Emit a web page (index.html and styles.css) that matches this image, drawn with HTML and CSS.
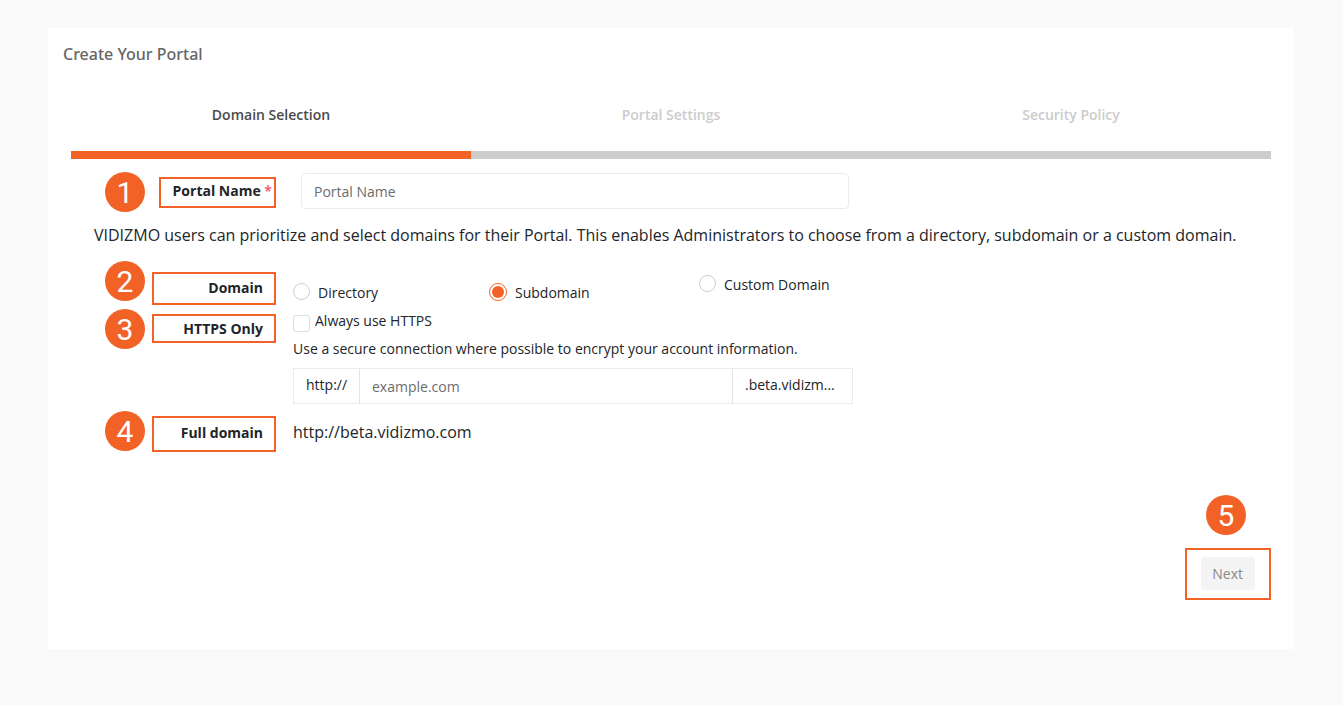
FILE: index.html
```html
<!DOCTYPE html>
<html lang="en">
<head>
<meta charset="utf-8">
<meta name="viewport" content="width=device-width, initial-scale=1">
<title>Create Your Portal</title>
<link rel="stylesheet" href="styles.css">
</head>
<body>
<main class="card">
  <header class="card-header"><h1 class="card-title">Create Your Portal</h1></header>
  <ol class="steps">
    <li class="step step-active" aria-current="step">Domain Selection</li>
    <li class="step">Portal Settings</li>
    <li class="step">Security Policy</li>
  </ol>
  <form class="form">
    <div class="row">
      <span class="badge">1</span>
      <label class="tag tag-name" for="portal-name">Portal Name&nbsp;<span class="required">*</span></label>
      <div class="field field-name"><input class="input" id="portal-name" type="text" placeholder="Portal Name"></div>
    </div>
    <p class="intro">VIDIZMO users can prioritize and select domains for their Portal. This enables Administrators to choose from a directory, subdomain or a custom domain.</p>
    <div class="row row-domain" role="radiogroup" aria-labelledby="domain-label">
      <span class="badge">2</span>
      <span class="tag tag-domain" id="domain-label">Domain</span>
      <div class="field options">
        <label class="option option-low"><input class="radio" type="radio" name="domain"><span>Directory</span></label>
        <label class="option option-low"><input class="radio" type="radio" name="domain" checked><span>Subdomain</span></label>
        <label class="option"><input class="radio" type="radio" name="domain"><span>Custom Domain</span></label>
      </div>
    </div>
    <div class="row row-https">
      <span class="badge">3</span>
      <span class="tag tag-https">HTTPS Only</span>
      <div class="field">
        <label class="check"><input class="checkbox" type="checkbox"><span>Always use HTTPS</span></label>
        <p class="help">Use a secure connection where possible to encrypt your account information.</p>
        <div class="group">
          <span class="addon">http://</span>
          <input class="group-input" type="text" placeholder="example.com" aria-label="Subdomain name">
          <span class="addon">.beta.vidizm...</span>
        </div>
      </div>
    </div>
    <div class="row row-full">
      <span class="badge">4</span>
      <span class="tag tag-full">Full domain</span>
      <output class="field full-domain">http://beta.vidizmo.com</output>
    </div>
    <div class="actions">
      <span class="badge">5</span>
      <div class="next-frame"><button class="next" type="button" disabled>Next</button></div>
    </div>
  </form>
</main>
</body>
</html>
```
FILE: styles.css
```css
* { box-sizing: border-box; }
body {
  margin: 0;
  background: #fafafa;
  color: #212529;
  font: 14px/24px "Open Sans", "Noto Sans", sans-serif;
}
.card { margin: 28px 49px 56px 48px; padding-bottom: 49px; background: #fff; }
.card-header { padding: 14px 15px 13px; border-bottom: 1px solid #fdfdfd; }
.card-title { margin: 0; color: #666; font-family: "Noto Sans", "Open Sans", sans-serif; font-size: 16px; font-weight: 500; line-height: 24px; }
.steps { display: flex; margin: 0 23px; padding: 0; list-style: none; }
.step {
  flex: 1;
  padding: 23px 0 24px;
  border-bottom: 8px solid #ccc;
  color: #ccc;
  font-weight: 600;
  text-align: center;
}
.step-active { border-color: #f26227; color: #4a4a4a; }
.form { padding: 13px 23px 0; }
.row {
  display: grid;
  grid-template-columns: 40px 124px minmax(0, 560px);
  column-gap: 7px;
  align-items: start;
  padding-left: 34px;
}
.badge {
  display: block;
  width: 40px;
  height: 40px;
  border-radius: 50%;
  background: #f26227;
  color: #fff;
  font: 30px/42px Roboto, "Liberation Sans", sans-serif;
  text-align: center;
}
.tag {
  display: flex;
  align-items: center;
  justify-content: flex-end;
  padding-right: 11px;
  border: 2px solid #f26227;
  font-weight: 700;
}
.tag-name { justify-self: end; width: 117px; height: 31px; margin-top: 5px; padding: 0 2px 3px 0; }
.tag-domain { height: 33px; margin-top: 11px; padding-bottom: 1px; }
.tag-https { height: 29px; margin-top: 5px; }
.tag-full { height: 36px; margin-top: 5px; padding-bottom: 2px; }
.required { color: #f4516c; font-weight: 600; }
.field { margin-left: 10px; margin-right: -10px; }
.field-name { padding: 1px 4px 0 8px; }
.input, .group-input { color: #495057; font: inherit; outline: 0; }
.input { display: block; width: 100%; height: 36px; padding: 0 12px; border: 1px solid #ebebeb; border-radius: 4px; }
.input::placeholder, .group-input::placeholder { color: #6c6c6c; opacity: 1; }
.intro { margin: 11px 23px 0; font-size: 16px; }
.row-domain { margin-top: 14px; }
.options { display: grid; grid-template-columns: 196px 210px 1fr; padding-top: 12px; }
.option { display: flex; gap: 8px; align-items: center; align-self: start; }
.option-low { padding-top: 8px; }
.radio, .checkbox {
  flex: none;
  appearance: none;
  width: 17px;
  height: 17px;
  margin: 0;
  border: 1px solid #ccc;
  border-radius: 50%;
  background: #fff;
}
.radio { margin-bottom: 3px; }
.radio:checked { width: 18px; height: 18px; border-color: #f26227; background: #f26227; background-clip: content-box; padding: 2px; }
.row-https { margin-top: 4px; }
.check { display: flex; gap: 5px; }
.checkbox { margin-top: 6px; border-color: #ddd; border-radius: 3px; }
.help { margin: 4px 0 7px; }
.group { display: grid; grid-template-columns: 65px minmax(0, 1fr) 119px; height: 36px; border: 1px solid #ebebeb; }
.addon { padding: 4px 12px; white-space: nowrap; }
.group-input { width: 100%; padding: 1px 12px 0; border: solid #e4e4e4; border-width: 0 1px; }
.row-full { margin-top: 7px; }
.full-domain { padding-top: 9px; font-size: 16px; }
.actions { display: flex; flex-direction: column; align-items: flex-end; gap: 13px; margin-top: 43px; }
.actions .badge { margin-right: 25px; }
.next-frame { padding: 7px 14px 8px; border: 2px solid #f26227; }
.next { display: block; height: 33px; padding: 0 12px 0 11px; border: 0; border-radius: 3px; background: #f4f4f4; color: #888; font: inherit; }
```
